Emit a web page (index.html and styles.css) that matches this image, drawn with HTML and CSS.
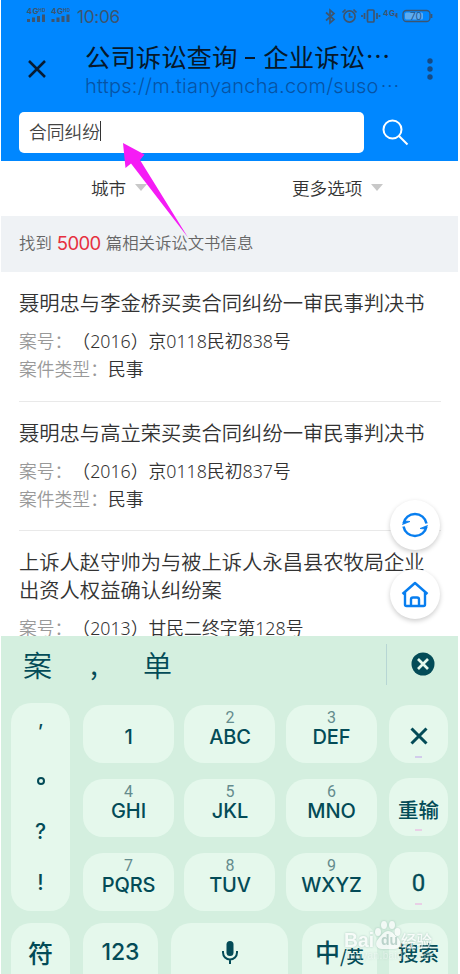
FILE: index.html
```
<!DOCTYPE html>
<html lang="zh-CN">
<head>
<meta charset="utf-8">
<title>公司诉讼查询</title>
<link rel="stylesheet" href="styles.css">
</head>
<body>
<main class="phone">
  <header class="top">
    <div class="status">
      <svg class="signal" width="46" height="20" viewBox="0 0 46 20"><g class="signal-text"><text x="0.500" y="6.500" textLength="12">4G</text><text class="hd" x="12.500" y="4.500" textLength="7">HD</text><text x="25" y="6.500" textLength="12">4G</text><text class="hd" x="37" y="4.500" textLength="7">HD</text></g><path d="M2.500 15v-3M7.500 15v-4.500M12.500 15V9M17.500 15V7.500M27 15v-3M32 15v-4.500M37 15V9M42 15V7.500" stroke="#3d5570" stroke-width="3"/></svg>
      <time class="clock">10:06</time>
      <svg class="status-icons" width="110" height="18" viewBox="0 0 110 18" fill="none" stroke="#3d5570" stroke-width="1.700">
        <path d="m1 5.500 8 7-4 3.500V3L9 6.500l-8 7"/>
        <circle cx="24.500" cy="9.500" r="5.600"/><path d="M24.500 6v4h3M17.500 5.500l3-3M31.500 5.500l-3-3"/>
        <rect x="42.500" y="3" width="6.500" height="12" rx="1"/><path d="M39.500 6v6M52 6v6M37 8v2M54.500 8v2"/>
        <text class="net" x="58" y="9" textLength="12">4G</text><path d="m70 8 1.500 1.500V6"/>
        <rect x="78" y="3.500" width="27" height="11" rx="3.500" stroke-width="1.300"/><rect x="80" y="5.500" width="18" height="7" rx="1.500" fill="#5daaf0" stroke="none"/><path d="M106.500 7v4"/><text class="charge" x="85" y="12.500">70</text>
      </svg>
    </div>
    <div class="titlebar">
      <svg class="close" width="20" height="20" viewBox="0 0 20 20"><path d="m2 2 16 16M18 2 2 18" stroke="#071b33" stroke-width="2.500"/></svg>
      <div class="heading">
        <h1>公司诉讼查询<i></i>企业诉讼<span class="dots">···</span></h1>
        <p class="url">https://m.tianyancha.com/suso<span class="dots">···</span></p>
      </div>
      <svg class="more" width="6" height="22" viewBox="0 0 6 22" fill="#164a83"><circle cx="3" cy="3" r="2.700"/><circle cx="3" cy="11" r="2.700"/><circle cx="3" cy="19" r="2.700"/></svg>
    </div>
    <div class="search">
      <div class="field">合同纠纷<span class="caret"></span></div>
      <svg width="28" height="28" viewBox="0 0 28 28" fill="none" stroke="#fff" stroke-width="2"><circle cx="10.500" cy="10.500" r="9"/><path d="m17 17 8.500 8.500"/></svg>
    </div>
  </header>
  <nav class="filters"><span class="city">城市<b></b></span><span class="options">更多选项<b></b></span></nav>
  <p class="summary"><span>找到</span><strong>5000</strong><span>篇相关诉讼文书信息</span></p>
  <section class="results">
    <article><h2>聂明忠与李金桥买卖合同纠纷一审民事判决书</h2><p><span>案号：</span>（2016）京0118民初838号</p><p><span>案件类型：</span><em>民事</em></p></article>
    <article><h2>聂明忠与高立荣买卖合同纠纷一审民事判决书</h2><p><span>案号：</span>（2016）京0118民初837号</p><p><span>案件类型：</span><em>民事</em></p></article>
    <article><h2>上诉人赵守帅为与被上诉人永昌县农牧局企业出资人权益确认纠纷案</h2><p><span>案号：</span>（2013）甘民二终字第128号</p></article>
    <div class="floating">
      <div class="round"><svg width="28" height="28" viewBox="0 0 28 28" fill="none" stroke="#087eef" stroke-width="2.500"><path d="M2.500 12.500A11.700 11.700 0 0 1 25.500 12.500M25.500 15.500A11.700 11.700 0 0 1 2.500 15.500"/><path d="m1.500 13.500 7.500-3-5-.5ZM26.500 14.500 19 17.500l5 .5Z" fill="#087eef" stroke-width=".8"/></svg></div>
      <div class="round"><svg width="28" height="28" viewBox="0 0 28 28" fill="none" stroke="#087eef" stroke-width="2.400" stroke-linejoin="round"><path d="M1.500 14 14 3l12.500 11M4 12v12.500q0 1.500 1.500 1.500h17q1.500 0 1.500-1.500V12M10 26v-6.500q0-2 2-2h4q2 0 2 2V26"/></svg></div>
    </div>
  </section>
  <section class="keyboard">
    <div class="candidates"><span>案</span><span class="comma">,</span><span>单</span><div class="clear"><svg width="24" height="24" viewBox="0 0 24 24"><circle cx="12" cy="12" r="11.500" fill="#034b57"/><path d="m7 7 10 10M17 7 7 17" stroke="#e6f8ec" stroke-width="2.700"/></svg></div></div>
    <div class="pad">
      <div class="punctuation"><span class="quote">’</span><span class="stop"></span><span>?</span><span>!</span></div>
      <div class="keys">
        <div class="key one">1</div><div class="key"><small>2</small>ABC</div><div class="key"><small>3</small>DEF</div>
        <div class="key"><small>4</small>GHI</div><div class="key"><small>5</small>JKL</div><div class="key"><small>6</small>MNO</div>
        <div class="key"><small>7</small>PQRS</div><div class="key"><small>8</small>TUV</div><div class="key"><small>9</small>WXYZ</div>
      </div>
      <div class="side">
        <div class="key"><svg width="18" height="18" viewBox="0 0 18 18"><path d="m1.500 1.500 15 15M16.500 1.500l-15 15" stroke="#034b57" stroke-width="3"/></svg><u></u></div>
        <div class="key cn">重输<u class="pink"></u></div><div class="key zero">0<u class="pink"></u></div>
      </div>
    </div>
    <div class="bottom">
      <div class="key symbol">符</div><div class="key number">123</div>
      <div class="key voice"><svg width="18" height="26" viewBox="0 0 18 26"><rect x="5.500" y="1" width="7" height="15" rx="3.500" fill="#034b57"/><path d="M2 11v1.500a7 7 0 0 0 14 0V11M9 19.500V24" fill="none" stroke="#034b57" stroke-width="2"/></svg></div>
      <div class="key language">中<small>/英</small></div><div class="key cn find">搜索</div>
    </div>
  </section>
  <svg class="arrow" width="70" height="100" viewBox="0 0 70 100"><path d="M3 3 24.500 14.500 20 20 68 97.500 11 23.500 5.500 28Z" fill="#f51cf5"/></svg>
  <svg class="watermark" width="96" height="44" viewBox="0 0 96 44"><text class="brand" x="1" y="28" textLength="30" lengthAdjust="spacingAndGlyphs">Bai</text><g><ellipse cx="35" cy="13" rx="3" ry="4"/><ellipse cx="41" cy="6" rx="3" ry="4"/><ellipse cx="49" cy="6" rx="3" ry="4"/><ellipse cx="54.500" cy="13" rx="3" ry="4"/><path d="M45 12c-4 0-6 4-9 7-5 5-3 11 3 11h12c7 0 8-7 4-11-4-3-5-7-10-7Z"/></g><text class="du" x="38" y="26">du</text><text class="exp" x="58" y="28" textLength="31">经验</text><text class="site" x="2" y="40" textLength="87">jingyan.baidu.com</text></svg>
</main>
</body>
</html>
```
FILE: styles.css
```
* { box-sizing: border-box; }
body { margin: 0; background: #fff; font-family: "Noto Sans CJK SC", sans-serif; font-weight: 350; text-spacing-trim: space-all; }
h1, h2, p { margin: 0; font-weight: 350; }
i, em, u { font-style: normal; text-decoration: none; }
svg { display: block; flex: none; }
.phone { position: relative; width: 457px; height: 974px; margin-left: 1px; overflow: hidden; color: #333; }
.top { height: 161px; background: #0087ff; }
.status { height: 34px; display: flex; padding: 7px 0 0 25px; }
.signal-text { font: 700 8px Inter, sans-serif; fill: #3d5570; }
.signal-text .hd { font-size: 4.500px; }
.clock { margin-left: 5px; width: 43px; font: 17.300px/20px Inter, sans-serif; color: #3d5570; letter-spacing: -.3px; }
.status-icons { margin-left: 205px; }
.net { font: 700 8px Inter, sans-serif; fill: #3d5570; stroke: none; }
.charge { font: 10px Inter, sans-serif; fill: #24578e; stroke: none; }
.titlebar { height: 78px; display: flex; padding-left: 26px; }
.close { margin-top: 25px; }
.heading { margin-left: 38px; width: 326px; white-space: nowrap; }
h1 { margin-top: 5px; font-size: 25.400px; font-weight: 400; line-height: 34px; color: #06182b; display: flex; }
h1 i { margin: 18px 8px 0 8px; width: 10px; height: 2px; background: #06182b; }
h1 .dots { font-family: Inter, sans-serif; letter-spacing: 1px; margin-left: 1px; }
.url { margin-top: 1px; font: 300 20px/25px Inter, sans-serif; letter-spacing: .25px; color: #0753a4; }
.url .dots { margin-left: 2px; letter-spacing: .8px; }
.more { margin: 24px 0 0 16px; }
.search { display: flex; padding-left: 18px; }
.field { width: 345px; height: 41px; border-radius: 5px; background: #fff; padding: 0 0 3px 10px; display: flex; align-items: center; font-size: 17.800px; line-height: 38px; color: #444; }
.caret { width: 1px; height: 20px; background: #333; }
.search svg { margin: 7px 0 0 18px; }
.filters { height: 55px; display: flex; font-size: 17.600px; line-height: 54px; }
.filters span { display: flex; align-items: center; height: 53px; }
.filters b { border: 6px solid transparent; border-top: 7px solid #c8c8c8; border-bottom: 0; margin-left: 9px; }
.city { margin-left: 90px; width: 201px; }
.summary { height: 56px; padding-left: 18px; background: #eff2f5; font-size: 16.400px; line-height: 52px; color: #666; display: flex; }
.summary strong { width: 44px; margin: 0 5px 0 5px; font: 400 18.500px/55px Inter, sans-serif; letter-spacing: -.6px; color: #e6303f; }
.results { position: relative; height: 364px; overflow: hidden; padding: 0 17px 0 18px; }
article { height: 129.500px; border-bottom: 1px solid #e9e9e9; padding-top: 16px; }
article:nth-child(3) { border: 0; }
h2 { font-size: 20.300px; line-height: 28px; margin-bottom: 11px; width: 407px; color: #333; }
article p { font-family: "Noto Sans", "Noto Sans CJK SC", sans-serif; font-size: 17.800px; line-height: 28px; white-space: nowrap; }
article p span { color: #999; }
.floating { position: absolute; right: 18px; top: 228px; display: grid; gap: 19px; }
.round { width: 50px; height: 50px; border-radius: 50%; background: #fff; box-shadow: 0 2px 5px #0003; display: grid; place-items: center; }
.keyboard { height: 338px; background: #d4efdf; color: #034b57; }
.candidates { height: 67px; display: flex; padding-left: 22px; font-size: 29px; line-height: 56px; }
.candidates .comma { width: 30px; margin: 0 34px 0 26px; text-align: center; line-height: 52px; }
.clear { height: 41px; margin: 8px 0 0 213px; padding: 8px 0 0 24px; border-left: 1px solid #b7d6d4; }
.candidates > span { width: 30px; }
.pad { display: flex; padding-left: 10px; }
.punctuation { width: 59px; height: 208px; border-radius: 20px; background: #e5f8ec; display: grid; grid-template-rows: 51px 51px 51px 51px; place-items: center; font: 500 21px Inter, sans-serif; padding-top: 1px; }
.punctuation .quote { padding-top: 4px; font-size: 19px; }
.stop { width: 8px; height: 8px; border: 2px solid #034b57; border-radius: 50%; }
.keys { margin: 2px 0 0 12.500px; display: grid; grid-template-columns: repeat(3, 91px); gap: 15.400px 10.500px; }
.side { margin: 2px 0 0 12.500px; display: grid; gap: 15.400px; align-content: start; }
.key { position: relative; height: 58px; border-radius: 20px; background: #e5f8ec; display: flex; flex-direction: column; align-items: center; justify-content: center; font: 500 20px/23px Inter, sans-serif; letter-spacing: -.1px; }
.keys .key { justify-content: flex-start; padding: 5px 0 0 1px; }
.keys small { font: 400 16px/16px Roboto, sans-serif; color: #648b8d; }
.keys .one { padding-top: 21px; }
.side .key { width: 59px; padding-top: 3px; }
.key.cn { font: 500 20.500px/24px "Noto Sans CJK SC", sans-serif; }
.side .zero { font: 400 24px/26px Roboto, sans-serif; padding-top: 5px; -webkit-text-stroke: .3px; }
.key u { position: absolute; bottom: 5px; width: 7px; height: 2px; background: #d2cdeb; }
.key .pink { background: #e9d0e6; }
.bottom { display: flex; margin: 12px 0 0 10px; }
.bottom .key { height: 70px; padding-bottom: 11px; }
.bottom .symbol { width: 59px; font: 500 25px/30px "Noto Sans CJK SC", sans-serif; padding-bottom: 13px; }
.bottom .number { width: 75px; margin-left: 13px; font-size: 23px; }
.bottom .voice { width: 117px; margin-left: 13px; }
.bottom .language { width: 75px; margin-left: 14px; flex-direction: row; font: 500 25px/30px "Noto Sans CJK SC", sans-serif; padding-bottom: 15px; }
.language small { font-size: 17.500px; padding-top: 11px; }
.bottom .find { width: 59px; margin-left: 12px; padding-bottom: 12px; }
.arrow { position: absolute; left: 119px; top: 140px; }
.watermark { position: absolute; left: 342px; top: 919px; fill: #fffffff0; opacity: .8; filter: drop-shadow(0 0 1px #6a938d99); }
.brand { font: 700 20px "Liberation Sans", sans-serif; }
.du { font: 700 14px "Liberation Sans", sans-serif; fill: #b3cbc5; }
.exp { font: 500 15.500px "Noto Sans CJK SC", sans-serif; }
.site { font: 10px "Liberation Sans", sans-serif; opacity: .5; }
```
